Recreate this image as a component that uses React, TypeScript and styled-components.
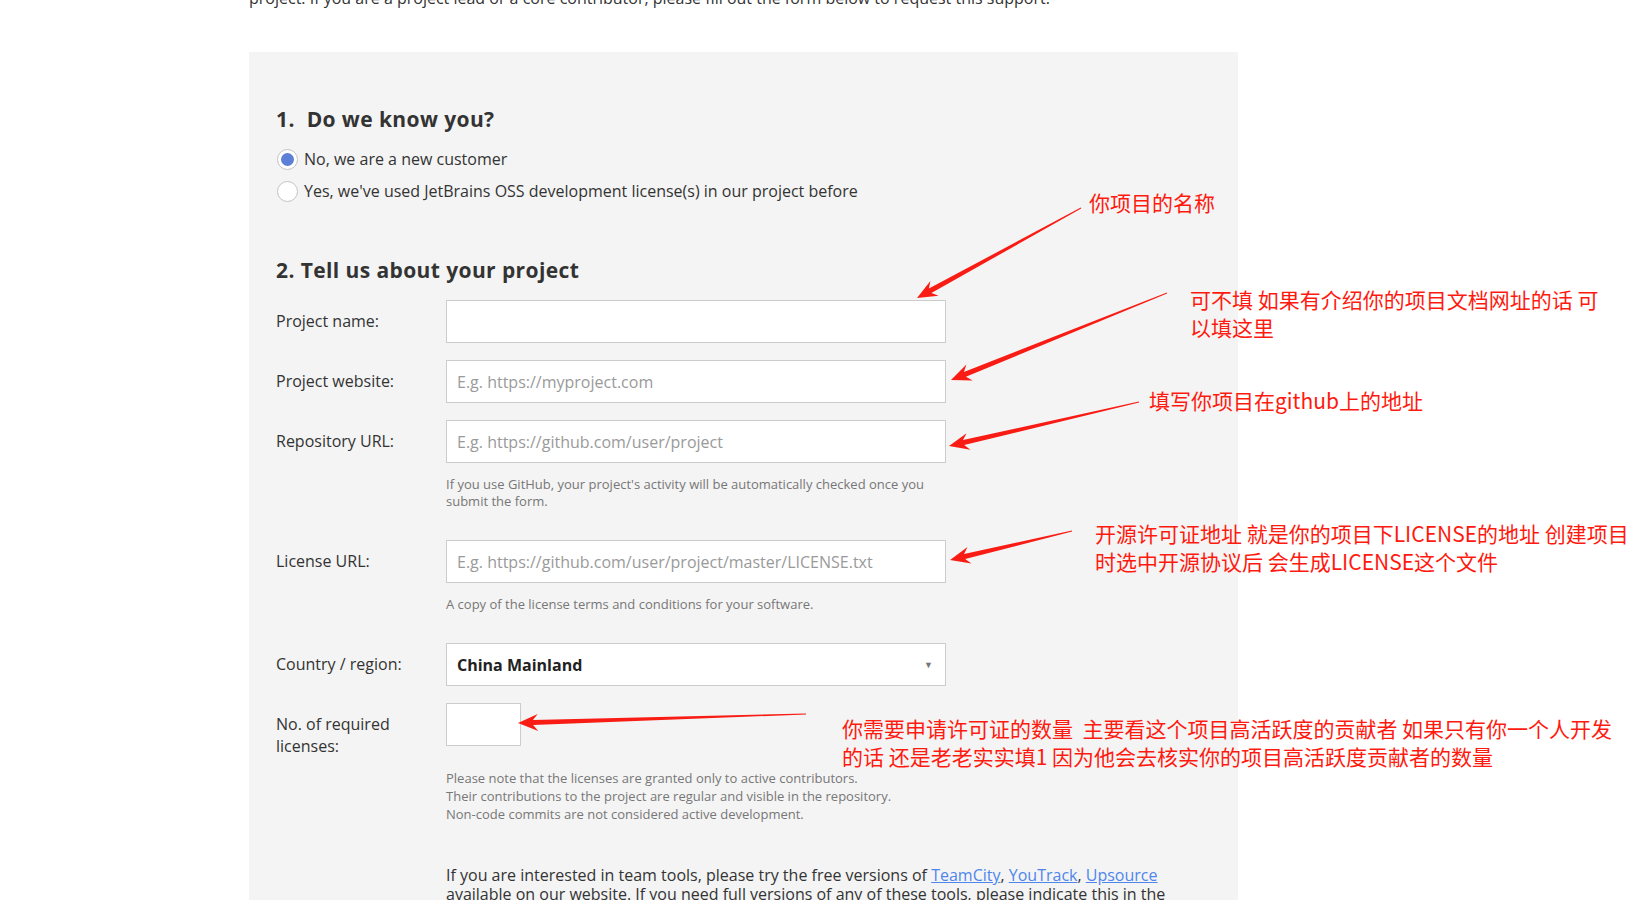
import React from "react";
import styled, { createGlobalStyle } from "styled-components";

const Global = createGlobalStyle`
  html, body { margin: 0; padding: 0; background: #ffffff; }
  body { font-family: "Open Sans", "Liberation Sans", sans-serif; color: #333; overflow: hidden; }
  * { box-sizing: border-box; }
`;

const Page = styled.div`
  position: relative;
  width: 1649px;
  height: 900px;
  overflow: hidden;
`;

const Content = styled.div`
  padding-left: 249px;
  width: 1238px;
`;

const Intro = styled.p`
  margin: -14px 0 0;
  font-size: 16px;
  line-height: 24px;
  color: #333;
`;

const Panel = styled.section`
  margin-top: 42px;
  background: #f4f4f4;
  padding: 53px 27px 60px;
  min-height: 900px;
`;

const Heading = styled.h2<{ $top?: number }>`
  margin: ${(p) => p.$top ?? 0}px 0 0;
  font-family: "Open Sans", "Liberation Sans", sans-serif;
  font-size: 21px;
  line-height: 28px;
  font-weight: 700;
  color: #333;
  letter-spacing: 0.4px;
`;

const Num = styled.span`
  margin-right: 6px;
`;

const RadioList = styled.div`
  margin-top: 10px;
  display: flex;
  flex-direction: column;
`;

const RadioRow = styled.label`
  display: flex;
  align-items: center;
  height: 32px;
  gap: 6px;
  font-size: 16px;
  color: #333;
`;

const RadioDot = styled.span<{ $checked?: boolean }>`
  width: 21px;
  height: 21px;
  border-radius: 50%;
  border: 1px solid #c4c4c4;
  background: #fff;
  display: flex;
  align-items: center;
  justify-content: center;
  margin-left: 1px;
  &::after {
    content: "";
    width: 13px;
    height: 13px;
    border-radius: 50%;
    background: ${(p) => (p.$checked ? "#5b80d6" : "transparent")};
  }
`;

const Form = styled.div`
  margin-top: 16px;
  display: flex;
  flex-direction: column;
  gap: 17px;
`;

const Field = styled.div`
  display: grid;
  grid-template-columns: 170px 500px;
  align-items: start;
`;

const Label = styled.div`
  font-size: 16px;
  line-height: 22px;
  padding-top: 10px;
  color: #333;
`;

const Control = styled.div`
  display: flex;
  flex-direction: column;
`;

const Input = styled.div<{ $w?: number }>`
  width: ${(p) => (p.$w ? `${p.$w}px` : "100%")};
  height: 43px;
  background: #fff;
  border: 1px solid #cccccc;
  display: flex;
  align-items: center;
  padding: 0 10px;
  font-size: 16px;
  color: #9a9a9a;
`;

const Select = styled(Input)`
  justify-content: space-between;
  color: #222;
  font-weight: 700;
`;

const Caret = styled.span`
  font-size: 9px;
  color: #777;
  font-weight: 400;
  margin-right: 2px;
`;

const Hint = styled.div<{ $lh?: number; $mt?: number; $mb?: number }>`
  margin-top: ${(p) => p.$mt ?? 13}px;
  margin-bottom: ${(p) => p.$mb ?? 13}px;
  font-size: 13px;
  line-height: ${(p) => p.$lh ?? 17}px;
  color: #777;
`;

const Outro = styled.p`
  margin: 43px 0 0 170px;
  width: 740px;
  font-size: 16px;
  line-height: 19px;
  color: #333;
`;

const Link = styled.a`
  color: #4f86ec;
  text-decoration: underline;
`;

const Overlay = styled.div`
  position: absolute;
  inset: 0;
  pointer-events: none;
`;

const ArrowLayer = styled.svg`
  position: absolute;
  left: 0;
  top: 0;
`;

const Note = styled.div<{ $x: number; $y: number }>`
  position: absolute;
  left: ${(p) => p.$x}px;
  top: ${(p) => p.$y}px;
  font-family: "Noto Sans CJK SC", "Noto Sans", sans-serif;
  font-size: 21px;
  line-height: 28px;
  color: #ff1a10;
  white-space: pre;
`;

function arrowPoints(tx: number, ty: number, hx: number, hy: number) {
  const dx = hx - tx;
  const dy = hy - ty;
  const len = Math.hypot(dx, dy);
  const ux = dx / len;
  const uy = dy / len;
  const nx = -uy;
  const ny = ux;
  const hl = 15;
  const sw = 2.6;
  const hw = 8.5;
  const back = 5;
  const p = (a: number, b: number) => `${a.toFixed(1)},${b.toFixed(1)}`;
  const ax = hx - ux * hl, ay = hy - uy * hl;
  const bx = hx - ux * (hl + back), by = hy - uy * (hl + back);
  return [
    p(tx + nx * 0.4, ty + ny * 0.4),
    p(ax + nx * sw, ay + ny * sw),
    p(bx + nx * hw, by + ny * hw),
    p(hx, hy),
    p(bx - nx * hw, by - ny * hw),
    p(ax - nx * sw, ay - ny * sw),
    p(tx - nx * 0.4, ty - ny * 0.4),
  ].join(" ");
}

const arrows: [number, number, number, number][] = [
  [1081, 208, 917, 298],
  [1167, 293, 951, 380],
  [1139, 402, 949, 446],
  [1072, 531, 950, 560],
  [806, 714, 518, 723],
];

export default function App() {
  return (
    <Page>
      <Global />
      <Content>
        <Intro>
          project. If you are a project lead or a core contributor, please fill out the form below to request this support.
        </Intro>
        <Panel>
          <Heading>
            <Num>1.</Num> Do we know you?
          </Heading>
          <RadioList>
            <RadioRow>
              <RadioDot $checked />
              No, we are a new customer
            </RadioRow>
            <RadioRow>
              <RadioDot />
              Yes, we've used JetBrains OSS development license(s) in our project before
            </RadioRow>
          </RadioList>

          <Heading $top={49}>2. Tell us about your project</Heading>

          <Form>
            <Field>
              <Label>Project name:</Label>
              <Control>
                <Input />
              </Control>
            </Field>
            <Field>
              <Label>Project website:</Label>
              <Control>
                <Input>E.g. https://myproject.com</Input>
              </Control>
            </Field>
            <Field>
              <Label>Repository URL:</Label>
              <Control>
                <Input>E.g. https://github.com/user/project</Input>
                <Hint>
                  If you use GitHub, your project's activity will be automatically checked once you submit the form.
                </Hint>
              </Control>
            </Field>
            <Field>
              <Label>License URL:</Label>
              <Control>
                <Input>E.g. https://github.com/user/project/master/LICENSE.txt</Input>
                <Hint>A copy of the license terms and conditions for your software.</Hint>
              </Control>
            </Field>
            <Field>
              <Label>Country / region:</Label>
              <Control>
                <Select>
                  China Mainland
                  <Caret>▼</Caret>
                </Select>
              </Control>
            </Field>
            <Field>
              <Label>
                No. of required
                <br />
                licenses:
              </Label>
              <Control>
                <Input $w={75} />
                <Hint $lh={18} $mt={23} $mb={0}>
                  Please note that the licenses are granted only to active contributors.
                  <br />
                  Their contributions to the project are regular and visible in the repository.
                  <br />
                  Non-code commits are not considered active development.
                </Hint>
              </Control>
            </Field>
          </Form>

          <Outro>
            If you are interested in team tools, please try the free versions of <Link href="#">TeamCity</Link>,{" "}
            <Link href="#">YouTrack</Link>, <Link href="#">Upsource</Link> available on our website. If you need full
            versions of any of these tools, please indicate this in the comments section below.
          </Outro>
        </Panel>
      </Content>

      <Overlay>
        <ArrowLayer width={1649} height={900} viewBox="0 0 1649 900">
          {arrows.map((a, i) => (
            <polygon key={i} points={arrowPoints(a[0], a[1], a[2], a[3])} fill="#f81c14" />
          ))}
        </ArrowLayer>
        <Note $x={1089} $y={188}>你项目的名称</Note>
        <Note $x={1190} $y={285}>{"可不填 如果有介绍你的项目文档网址的话 可\n以填这里"}</Note>
        <Note $x={1149} $y={386}>填写你项目在github上的地址</Note>
        <Note $x={1095} $y={519}>{"开源许可证地址 就是你的项目下LICENSE的地址 创建项目\n时选中开源协议后 会生成LICENSE这个文件"}</Note>
        <Note $x={842} $y={714}>
          {"你需要申请许可证的数量  主要看这个项目高活跃度的贡献者 如果只有你一个人开发\n的话 还是老老实实填1 因为他会去核实你的项目高活跃度贡献者的数量"}
        </Note>
      </Overlay>
    </Page>
  );
}
